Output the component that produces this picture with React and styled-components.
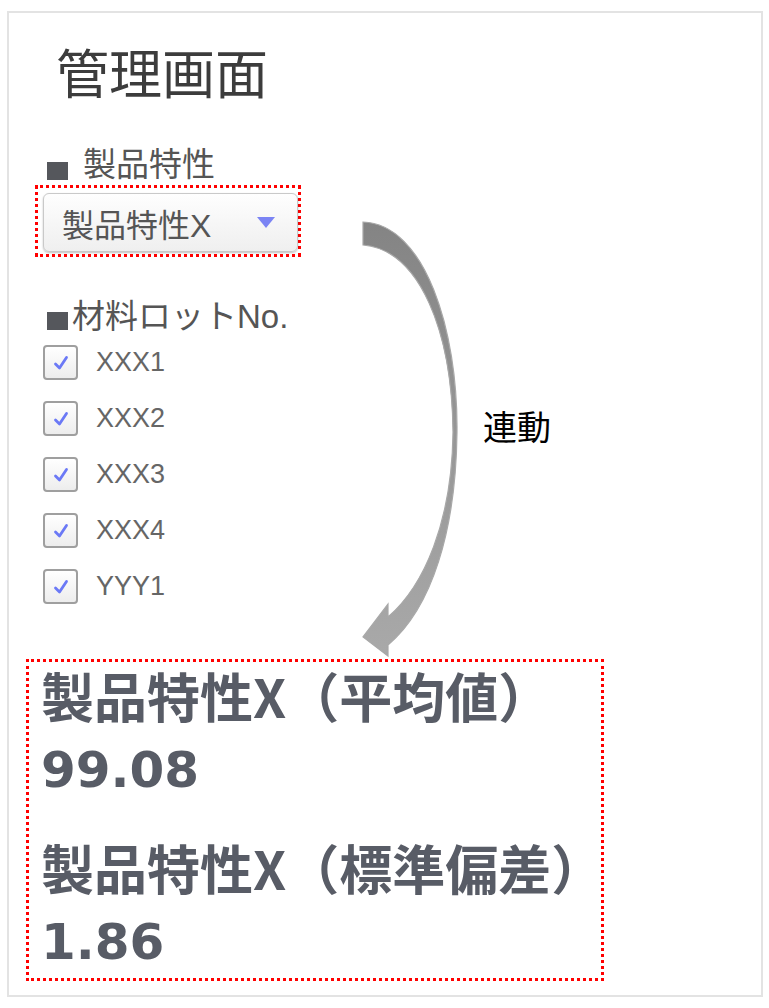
import React from "react";
import styled, { createGlobalStyle } from "styled-components";

const GlobalStyle = createGlobalStyle`
  html, body { margin: 0; padding: 0; background: #ffffff; }
  body { font-family: "Liberation Sans", "Noto Sans CJK JP", sans-serif; }
`;

const Page = styled.div`
  padding: 11px 0 0 7px;
`;

const Frame = styled.div`
  position: relative;
  box-sizing: border-box;
  width: 756px;
  height: 986px;
  border: 2px solid #e3e3e3;
  padding-top: 32px;
  display: flex;
  flex-direction: column;
  align-items: flex-start;
`;

const Title = styled.h1`
  margin: 0 0 0 47px;
  font-family: "Noto Sans CJK JP", sans-serif;
  font-size: 53px;
  line-height: 1;
  font-weight: 400;
  color: #3c3c3c;
`;

const SectionLabel = styled.div`
  display: flex;
  align-items: center;
  gap: ${(p) => p.$gap}px;
  margin: ${(p) => p.$top}px 0 0 38px;
  font-size: 33px;
  line-height: 33px;
  color: #555555;
`;

const Bullet = styled.span`
  display: inline-block;
  width: 21px;
  height: 18px;
  margin-top: ${(p) => p.$drop}px;
  background: #55575c;
`;

const Highlight = styled.div`
  box-sizing: border-box;
  border: 3px dotted #ff0000;
`;

const SelectWrap = styled(Highlight)`
  margin: 4px 0 0 26px;
  padding: 5px 0 2px 5px;
`;

const SelectButton = styled.div`
  box-sizing: border-box;
  width: 255px;
  height: 59px;
  display: flex;
  align-items: center;
  justify-content: space-between;
  padding: 0 22px 0 18px;
  border: 1px solid #c9c9c9;
  border-radius: 6px;
  background: linear-gradient(#fefefe, #efefef);
  box-shadow: 0 1px 2px rgba(0, 0, 0, 0.25);
  font-size: 32px;
  color: #555555;
`;

const Caret = styled.span`
  width: 0;
  height: 0;
  border-left: 9px solid transparent;
  border-right: 9px solid transparent;
  border-top: 11px solid #7b84f4;
`;

const CheckList = styled.div`
  display: flex;
  flex-direction: column;
  gap: 21px;
  margin: 12px 0 0 34px;
`;

const CheckRow = styled.label`
  display: flex;
  align-items: center;
  gap: 18px;
  font-size: 27px;
  color: #666666;
`;

const Box = styled.span`
  box-sizing: border-box;
  width: 35px;
  height: 35px;
  display: flex;
  align-items: center;
  justify-content: center;
  border: 2px solid #9f9f9f;
  border-radius: 4px;
  background: linear-gradient(#ffffff, #ededed);
`;

const ResultBox = styled(Highlight)`
  width: 578px;
  margin: 55px 0 0 17px;
  padding: 0 0 0 12px;
  font-weight: 700;
  color: #585c66;
`;

const ResultTitle = styled.div`
  font-family: "Noto Sans CJK JP", sans-serif;
  font-size: 53px;
  line-height: 66px;
  margin: ${(p) => p.$gap || 0}px 0 6px;
`;

const ResultValue = styled.div`
  font-family: "DejaVu Sans", sans-serif;
  font-size: 50px;
  line-height: 72px;
`;

const Annotation = styled.div`
  position: absolute;
  left: 331px;
  top: 187px;
  display: flex;
  align-items: flex-start;
  gap: 3px;
`;

const LinkLabel = styled.span`
  margin-top: 209px;
  font-family: "Noto Sans CJK JP", sans-serif;
  font-size: 34px;
  line-height: 1;
  color: #000000;
`;

const Check = () => (
  <svg width="16" height="16" viewBox="0 0 16 16">
    <path d="M2.5 9 L6.5 13 L13.5 2.5" fill="none" stroke="#6b79f6" strokeWidth="2.8" strokeLinecap="round" strokeLinejoin="round" />
  </svg>
);

const CurvedArrow = () => (
  <svg width="140" height="480" viewBox="340 200 140 480">
    <defs>
      <linearGradient id="arrowFill" x1="0" y1="0" x2="0" y2="1">
        <stop offset="0" stopColor="#848484" />
        <stop offset="1" stopColor="#a9a9a9" />
      </linearGradient>
    </defs>
    <path
      d="M363 222 C425 224 458 330 457 432 C456 530 432 608 388 645 L388 656 L363 637 L388 604 L388 617 C424 586 452 522 453 432 C452 332 420 250 363 245 Z"
      fill="url(#arrowFill)"
      stroke="#a8a8a8"
      strokeWidth="1.2"
      strokeLinejoin="miter"
    />
  </svg>
);

const lots = ["XXX1", "XXX2", "XXX3", "XXX4", "YYY1"];

export default function App() {
  return (
    <>
      <GlobalStyle />
      <Page>
        <Frame>
          <Title>管理画面</Title>
          <SectionLabel $top={50} $gap={15}>
            <Bullet $drop={12} />
            <span>製品特性</span>
          </SectionLabel>
          <SelectWrap>
            <SelectButton>
              <span>製品特性X</span>
              <Caret />
            </SelectButton>
          </SelectWrap>
          <SectionLabel $top={43} $gap={4}>
            <Bullet $drop={8} />
            <span>材料ロットNo.</span>
          </SectionLabel>
          <CheckList>
            {lots.map((lot) => (
              <CheckRow key={lot}>
                <Box>
                  <Check />
                </Box>
                <span>{lot}</span>
              </CheckRow>
            ))}
          </CheckList>
          <ResultBox>
            <ResultTitle>製品特性X（平均値）</ResultTitle>
            <ResultValue>99.08</ResultValue>
            <ResultTitle $gap={28}>製品特性X（標準偏差）</ResultTitle>
            <ResultValue>1.86</ResultValue>
          </ResultBox>
          <Annotation>
            <CurvedArrow />
            <LinkLabel>連動</LinkLabel>
          </Annotation>
        </Frame>
      </Page>
    </>
  );
}
